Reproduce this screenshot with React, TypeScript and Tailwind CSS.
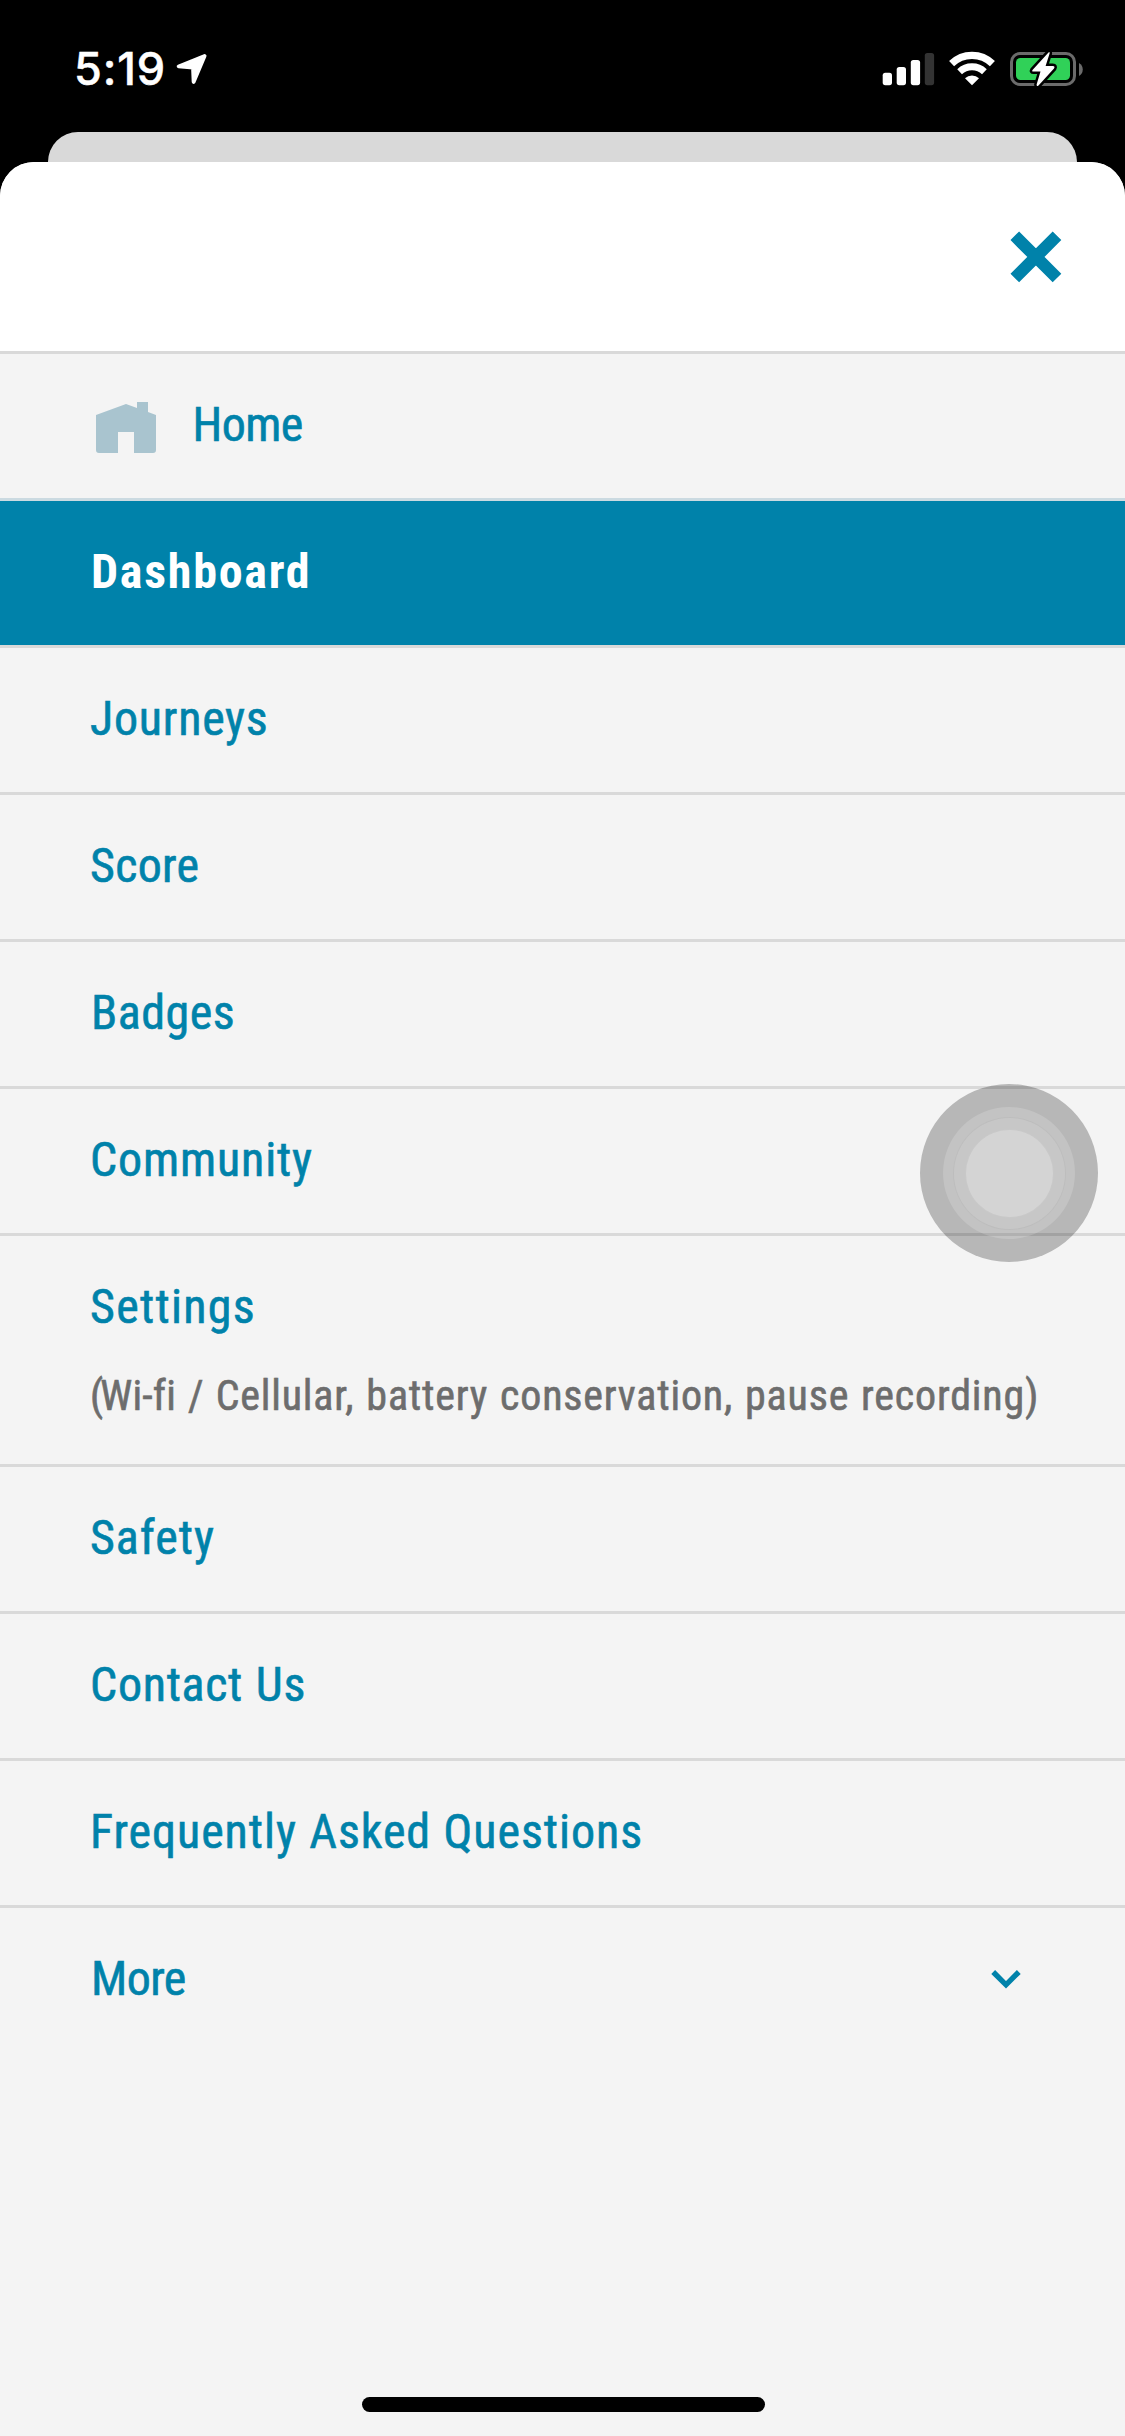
type Item = { label: string; className: string; active?: boolean };

const beforeSettings: Item[] = [
  { label: "Dashboard", className: "pl-px tracking-[1.75px]", active: true },
  { label: "Journeys", className: "tracking-[0.75px]" },
  { label: "Score", className: "tracking-[0.3px]" },
  { label: "Badges", className: "pl-px tracking-[0.5px]" },
  { label: "Community", className: "tracking-[0.85px]" },
];

const afterSettings: Item[] = [
  { label: "Safety", className: "tracking-[0.95px]" },
  { label: "Contact Us", className: "tracking-[0.7px] [word-spacing:1px]" },
  { label: "Frequently Asked Questions", className: "tracking-[0.95px] [word-spacing:0.5px]" },
];

function MenuRow({ label, className, active }: Item) {
  return (
    <li
      className={
        active
          ? "h-[147px] border-t-[3px] border-[#cbdae1] bg-[#0082aa] pl-[90px] font-bold text-white [-webkit-text-stroke:0px]"
          : "h-[147px] border-t-[3px] border-[#d9d9d9] pl-[90px]"
      }
    >
      <a className={`block leading-[142px] ${className}`}>{label}</a>
    </li>
  );
}

function StatusBar() {
  return (
    <header className="flex h-[132px] items-start bg-black text-white">
      <span className="ml-[74px] mt-[42px] w-[93px] whitespace-nowrap font-['Inter',sans-serif] text-[45px] font-medium leading-[54px] tracking-[0.9px] [-webkit-text-stroke:0.5px_white]">
        5:19
      </span>
      <svg className="ml-[9px] mt-[53px] h-[32px] w-[32px]" viewBox="0 0 32 32">
        <path d="M28.6 3L2.6 13.4L17 14.6L17.6 29Z" fill="white" stroke="white" strokeWidth="3.8" strokeLinejoin="round" />
      </svg>
      <svg className="ml-auto mt-[50px] h-[38px] w-[53px]" viewBox="882 50 53 38" fill="white">
        <rect x="882.7" y="72.7" width="9.3" height="12.5" rx="2.6" />
        <rect x="896.7" y="67" width="9.3" height="18.2" rx="2.6" />
        <rect x="910.8" y="60" width="9.3" height="25.2" rx="2.6" />
        <rect x="924.8" y="53" width="9.3" height="32.2" rx="2.6" fill="#333333" />
      </svg>
      <svg className="ml-[13px] mt-[50px] h-[38px] w-[48px]" viewBox="948 50 48 38">
        <path d="M951.6 63.6A29.3 29.3 0 0 1 992.4 63.6" fill="none" stroke="white" strokeWidth="7.2" />
        <path d="M959.6 71.8A17.8 17.8 0 0 1 984.4 71.8" fill="none" stroke="white" strokeWidth="6.8" />
        <path d="M965 78.3A10 10 0 0 1 979 78.3L972 85.3Z" fill="white" />
      </svg>
      <svg className="ml-[12px] mr-[39px] mt-[48px] h-[42px] w-[78px]" viewBox="1008 48 78 42">
        <rect x="1011.5" y="53.5" width="63" height="31" rx="8.5" fill="none" stroke="#6b6b6b" strokeWidth="3" />
        <rect x="1016" y="58" width="54" height="22" rx="4.5" fill="#30d158" />
        <path d="M1079 63A7.5 7.5 0 0 1 1079 76Z" fill="#6b6b6b" />
        <path
          d="M1048.5 52.5L1032.5 70Q1031.5 71.6 1033.5 71.6H1040.5L1036.6 84.6Q1036.6 87 1038.5 85.6L1054 68.5Q1055.4 66 1052.8 66H1045.6L1049.6 53.5Q1049.8 51.2 1048.5 52.5Z"
          fill="white"
          stroke="black"
          strokeWidth="5"
          strokeLinejoin="round"
          paintOrder="stroke"
        />
      </svg>
    </header>
  );
}

export default function App() {
  return (
    <div className="relative flex h-[2436px] w-[1125px] flex-col overflow-hidden bg-black font-['Roboto',sans-serif]">
      <StatusBar />
      <div className="mx-[48px] h-[30px] rounded-t-[30px] bg-[#d9d9d9]" />
      <main className="flex flex-1 flex-col overflow-hidden rounded-t-[34px] bg-[#f4f4f4] text-[48px] text-[#0082aa] [-webkit-text-stroke:0.6px_currentColor] [font-stretch:75%]">
        <div className="flex h-[189px] shrink-0 items-start justify-end bg-white pr-[63px] pt-[69px]">
          <button aria-label="Close">
            <svg className="h-[52px] w-[52px]" viewBox="0 0 52 52">
              <path d="M4.8 4.8L47 47M47 4.8L4.8 47" stroke="#0082aa" strokeWidth="12.2" />
            </svg>
          </button>
        </div>
        <ul>
          <li className="flex h-[147px] items-start border-t-[3px] border-[#d9d9d9] pl-[96px]">
            <svg className="mt-[48px] h-[51px] w-[60px]" viewBox="0 0 60 51" fill="#a9c4cf">
              <path d="M0 13L30 2L41 6V0H52V10L60 13V48Q60 51 57 51H38V30H22V51H3Q0 51 0 48Z" />
            </svg>
            <a className="ml-[36.5px] leading-[142px] tracking-[-0.6px]">Home</a>
          </li>
          {beforeSettings.map((item) => (
            <MenuRow key={item.label} {...item} />
          ))}
          <li className="h-[231px] border-t-[3px] border-[#d9d9d9] pl-[90px] pt-[15px]">
            <a className="block leading-[112px] tracking-[1.3px]">Settings</a>
            <p className="mt-[5px] whitespace-nowrap text-[42px] leading-[56px] tracking-[0.82px] text-[#6d6d6d] [font-variant-ligatures:none] [word-spacing:1.5px]">
              <span className="tracking-[-3px]">(</span>
              <span className="tracking-[0.2px] [word-spacing:2px]">Wi-fi / </span>
              Cellular, battery conservation, pause recording)
            </p>
          </li>
          {afterSettings.map((item) => (
            <MenuRow key={item.label} {...item} />
          ))}
          <li className="flex h-[147px] items-start justify-between border-t-[3px] border-[#d9d9d9] pl-[91px] pr-[103px]">
            <a className="leading-[142px] tracking-[-0.6px]">More</a>
            <svg className="mt-[61px] h-[20px] w-[32px]" viewBox="990 1969 32 20">
              <path d="M993.2 1972L1006 1984.8L1018.8 1972" fill="none" stroke="#0082aa" strokeWidth="5.4" />
            </svg>
          </li>
        </ul>
        <div className="mb-[24px] ml-[362px] mt-auto h-[15px] w-[403px] rounded-full bg-black" />
      </main>
      <div className="absolute left-[920px] top-[1084px] flex size-[178px] items-center justify-center rounded-full bg-black/25">
        <div className="flex size-[132px] items-center justify-center rounded-full bg-white/17">
          <div className="flex size-[113px] items-center justify-center rounded-full border border-black/5 bg-white/8">
            <div className="size-[89px] rounded-full border border-black/5 bg-[#d4d4d4]" />
          </div>
        </div>
      </div>
    </div>
  );
}
